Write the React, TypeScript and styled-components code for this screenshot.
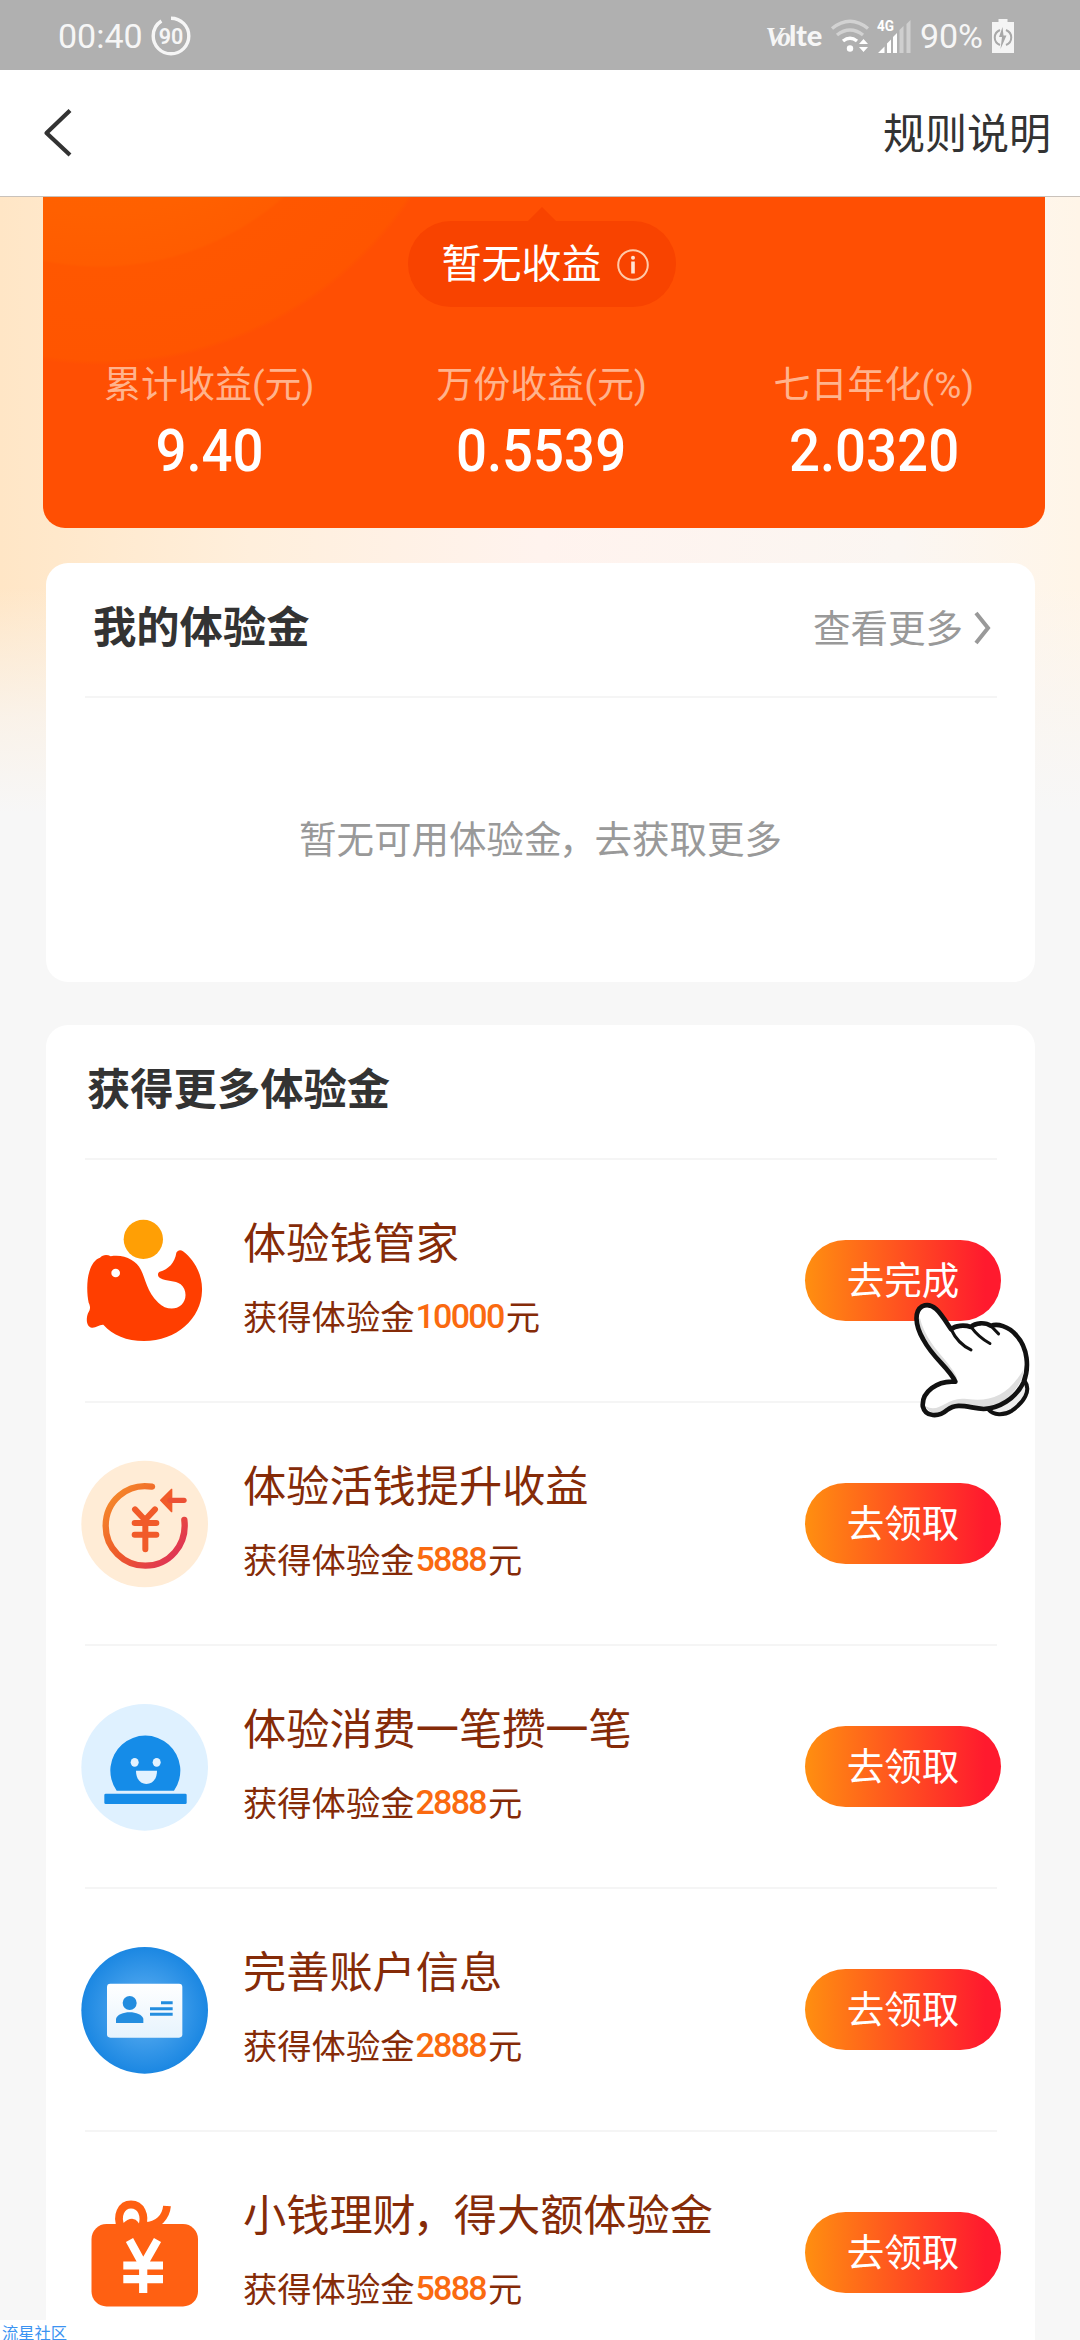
import React from "react";
import styled, { createGlobalStyle } from "styled-components";

const cjk = `"Noto Sans CJK SC", "Noto Sans", sans-serif`;
const latin = `Roboto, "Noto Sans CJK SC", sans-serif`;

const GlobalStyle = createGlobalStyle`
  * { box-sizing: border-box; }
  body { margin: 0; background: #f7f7f7; font-family: ${cjk}; }
  svg { display: block; overflow: visible; }
`;

const Screen = styled.div`
  position: relative;
  display: flex;
  flex-direction: column;
  width: 1080px;
  height: 2340px;
  overflow: hidden;
  background: #f7f7f7;
`;

const StatusBar = styled.div`
  flex: none;
  display: flex;
  align-items: center;
  justify-content: space-between;
  height: 70px;
  padding: 1px 66px 0 58px;
  background: #b0b0b0;
  color: #f6f6f6;
  font: 400 34px/40px ${latin};
`;

const StatusGroup = styled.div<{ $gap: number }>`
  display: flex;
  align-items: center;
  gap: ${(p) => p.$gap}px;
`;

const NavBar = styled.div`
  flex: none;
  display: flex;
  align-items: center;
  justify-content: space-between;
  height: 127px;
  padding: 0 29px 0 43px;
  background: #fff;
  border-bottom: 1px solid #c9c2bb;
`;

const NavLink = styled.span`
  color: #333;
  font-size: 42px;
  line-height: 60px;
  padding-bottom: 5px;
`;

const Content = styled.main`
  flex: 1;
  display: flex;
  flex-direction: column;
  min-height: 0;
  background:
    linear-gradient(to bottom, rgba(247, 247, 247, 0) 390px, rgba(248, 246, 244, 0.75) 520px, #f7f7f7 616px),
    linear-gradient(to right, #ffe6c6 0, #ffefdc 250px, #fff3ee 540px, #fbf6f2 900px, #fff5e8 1080px);
`;

const YieldCard = styled.section`
  flex: none;
  display: flex;
  flex-direction: column;
  align-items: center;
  height: 331px;
  margin: 0 35px 0 43px;
  padding-top: 24px;
  border-radius: 0 0 22px 22px;
  background: radial-gradient(
    circle at 57px -208px,
    #ff6500 0,
    #ff6000 225px,
    #ff5c00 276px,
    #ff5700 279px,
    #ff5500 371px,
    #ff4f03 376px
  );
`;

const YieldPill = styled.div`
  position: relative;
  display: flex;
  align-items: center;
  gap: 15px;
  height: 86px;
  margin-right: 5px;
  padding: 0 27px 7px 34px;
  border-radius: 43px;
  background: #f84300;
  color: #fff;
  font-size: 40px;
  line-height: 60px;

  &::before {
    content: "";
    position: absolute;
    left: 50%;
    top: -14px;
    margin-left: -14px;
    border: 14px solid transparent;
    border-top: 0;
    border-bottom-color: #f84300;
  }
`;

const InfoWrap = styled.span`
  padding-top: 9px;
`;

const Stats = styled.div`
  display: grid;
  grid-template-columns: repeat(3, 1fr);
  align-self: stretch;
  margin-top: 52px;
  padding-right: 5px;
`;

const Stat = styled.div`
  display: flex;
  flex-direction: column;
  align-items: center;
`;

const StatLabel = styled.span`
  color: #ffb38d;
  font: 400 37px/54px ${latin};
`;

const StatValue = styled.span`
  color: #fff;
  font: 500 59px/70px ${latin};
  transform: scaleX(0.925);
  margin-top: 3px;
`;

const Card = styled.section<{ $top: number; $height: number; $open?: boolean }>`
  flex: none;
  display: flex;
  flex-direction: column;
  height: ${(p) => p.$height}px;
  margin: ${(p) => p.$top}px 45px 0 46px;
  border-radius: ${(p) => (p.$open ? "22px 22px 0 0" : "22px")};
  background: #fff;
`;

const CardHead = styled.header<{ $indent: number }>`
  flex: none;
  display: flex;
  align-items: center;
  justify-content: space-between;
  height: 133px;
  padding: 0 44px 12px ${(p) => p.$indent}px;
`;

const CardTitle = styled.h2`
  margin: 0;
  color: #333;
  font-size: 43.3px;
  font-weight: 700;
  line-height: 60px;
`;

const MoreLink = styled.span`
  display: flex;
  align-items: center;
  gap: 11px;
  padding-top: 4px;
  color: #999;
  font-size: 37.5px;
  line-height: 54px;
`;

const ChevronWrap = styled.span`
  padding-top: 4px;
`;

const Divider = styled.div`
  flex: none;
  height: 2px;
  margin: 0 38px 0 39px;
  background: #f5f5f5;
`;

const EmptyNote = styled.div`
  flex: 1;
  display: flex;
  align-items: center;
  justify-content: center;
  padding-bottom: 7px;
  color: #999;
  font-size: 37.5px;
`;

const Comma = styled.span`
  margin-left: -0.07em;
  letter-spacing: -0.05em;
`;

const Task = styled.div`
  flex: none;
  display: flex;
  align-items: center;
  height: 241px;
  padding: 0 34px 0 35px;
`;

const TaskIcon = styled.svg`
  flex: none;
  width: 127px;
  height: 127px;
`;

const TaskText = styled.div`
  flex: 1;
  display: flex;
  flex-direction: column;
  gap: 21px;
  margin-left: 35px;
  padding-bottom: 13px;
  color: #852b08;
`;

const TaskName = styled.span`
  font-size: 43.2px;
  line-height: 60px;
`;

const TaskReward = styled.span`
  display: flex;
  align-items: center;
  font-size: 34.3px;
  line-height: 48px;
`;

const Amount = styled.b`
  padding-top: 3px;
  color: #fa6a10;
  font: 500 34px/45px ${latin};
  letter-spacing: -1.7px;
  margin: 0 2px 0 1px;
`;

const TaskButton = styled.div`
  position: relative;
  display: flex;
  align-items: center;
  justify-content: center;
  width: 196px;
  height: 81px;
  padding-bottom: 6px;
  border-radius: 41px;
  background: linear-gradient(to right, #ff8f10, #ff1a2e 92%);
  color: #fff;
  font-size: 37.5px;
`;

const Pointer = styled.svg`
  position: absolute;
  left: 107px;
  top: 61px;
  width: 120px;
  height: 118px;
  z-index: 1;
`;

const Watermark = styled.div`
  position: absolute;
  left: 0;
  bottom: 0;
  width: 70px;
  height: 20px;
  padding: 0 0 0 2px;
  background: #fff;
  color: #3b93f2;
  font-size: 16.3px;
  line-height: 24px;
  white-space: nowrap;
`;

function BatteryRing() {
  return (
    <svg width="40" height="40" viewBox="0 0 40 40">
      <circle cx="20" cy="20" r="17.8" fill="none" stroke="#f6f6f6" strokeWidth="3.4" strokeDasharray="101 11" transform="rotate(-90 20 20)" />
      <text x="20" y="27.6" textAnchor="middle" fontFamily="Roboto" fontWeight="600" fontSize="21.5" fill="#f6f6f6">90</text>
    </svg>
  );
}

const Volte = styled.span`
  display: flex;
  align-items: baseline;
  line-height: 40px;
`;

const VolteScript = styled.i`
  font: italic 700 27px/40px "Liberation Serif", serif;
  letter-spacing: -3px;
  margin-right: 1px;
`;

const VolteBold = styled.b`
  font: 900 29px/40px Lato, sans-serif;
  letter-spacing: -0.3px;
`;

function WifiMark() {
  return (
    <svg width="38" height="34" viewBox="0 0 38 34" fill="none" strokeWidth="3.4">
      <path d="M1 9.5 Q19 -5 37 9.5" stroke="#d2d2d2" />
      <path d="M6 16 Q19 6 32 16" stroke="#d2d2d2" />
      <path d="M12 22 Q19 16.500 26 22" stroke="#fff" />
      <circle cx="19" cy="29.500" r="3.200" fill="#fff" />
      <path d="M28 25 L32.500 20 L37 25Z M28 28 L32.500 33 L37 28Z" fill="#fff" />
    </svg>
  );
}

function SignalMark() {
  return (
    <svg width="33" height="34" viewBox="0 0 33 34">
      <path d="M0 34 L6.500 27.500 V34Z M9 34 V24.500 L13 20.500 V34Z M15 34 V18 L19 14 V34Z" fill="#fff" />
      <path d="M21.500 34 V11 L25.500 7 V34Z M28.500 34 V5 L32.500 1 V34Z" fill="#cfcfcf" />
      <text x="-1" y="11.500" fontFamily="Roboto" fontWeight="700" fontSize="15" textLength="17" lengthAdjust="spacingAndGlyphs" fill="#fff">4G</text>
    </svg>
  );
}

function BatteryMark() {
  return (
    <svg width="22" height="34" viewBox="0 0 22 34">
      <path d="M6.500 0 H15.500 V3 H22 V34 H0 V3 H6.500Z" fill="#f4f4f4" />
      <path d="M8 11 C1 14 1 23 8 26 M14 11 C21 14 21 23 14 26" fill="none" stroke="#a8a8a8" strokeWidth="2" />
      <path d="M10.500 8 L7 18 H10 L8.500 30 L14.500 16.500 H11.500Z" fill="#a8a8a8" />
    </svg>
  );
}

function WhaleIcon() {
  return (
    <TaskIcon viewBox="63 81 381 381">
      <circle cx="250" cy="148" r="59" fill="#ff9f05" />
      <path
        fill="#ff3e00"
        d="M120 203C128 194 142 193 152 199C192 192 228 210 243 240C258 270 260 304 295 338C315 358 345 362 364 345C382 328 380 298 362 283C345 270 320 276 300 264C292 259 292 248 299 245C325 238 345 218 349 188C353 180 362 178 369 184C405 212 428 255 426 303C424 385 350 453 252 453C200 453 158 435 130 404C118 403 108 414 96 413C78 410 78 385 84 370C90 360 93 352 86 338C80 310 80 270 88 245C95 222 105 208 120 203Z"
      />
      <circle cx="167" cy="249" r="13" fill="#fff" />
    </TaskIcon>
  );
}

function YuanReturnIcon() {
  return (
    <TaskIcon viewBox="63 60 381 381">
      <defs>
        <linearGradient id="ring" gradientUnits="userSpaceOnUse" x1="160" y1="150" x2="370" y2="340">
          <stop offset="0" stopColor="#f58a2b" />
          <stop offset="0.5" stopColor="#ee5a2a" />
          <stop offset="1" stopColor="#de3258" />
        </linearGradient>
      </defs>
      <circle cx="254" cy="252" r="190" fill="#ffecd6" />
      <path d="M276 140 C200 128 137 184 137 258 C137 325 192 377 256 377 C327 377 382 315 373 240" fill="none" stroke="url(#ring)" strokeWidth="19" strokeLinecap="round" />
      <path d="M225 208 L255 240 L285 208 M224 249 H289 M224 284 H289 M256 242 V328" fill="none" stroke="#f15b2a" strokeWidth="18" strokeLinecap="round" strokeLinejoin="round" />
      <path d="M302 181 L335 148 V215Z" fill="#f15b2a" stroke="#f15b2a" strokeWidth="4" strokeLinejoin="round" />
      <path d="M330 181 H372" stroke="#ec5034" strokeWidth="16" strokeLinecap="round" />
    </TaskIcon>
  );
}

function SmileIcon() {
  return (
    <TaskIcon viewBox="63 69 381 381">
      <circle cx="254" cy="262" r="190" fill="#dff1ff" />
      <path d="M170 332 A105 105 0 1 1 342 332Z" fill="#158ce8" />
      <rect x="133" y="341" width="247" height="31" rx="4" fill="#158ce8" />
      <ellipse cx="224" cy="247" rx="12" ry="13" fill="#e2f2ff" />
      <ellipse cx="290" cy="247" rx="12" ry="13" fill="#e2f2ff" />
      <path d="M228 272 H291 C291 298 277 312 259 312 C242 312 228 298 228 272Z" fill="#e2f2ff" />
    </TaskIcon>
  );
}

function IdCardIcon() {
  return (
    <TaskIcon viewBox="63 78 381 381">
      <defs>
        <radialGradient id="disc">
          <stop offset="0.4" stopColor="#46a1ec" />
          <stop offset="1" stopColor="#1b87e2" />
        </radialGradient>
        <linearGradient id="paper" x1="0" y1="0" x2="0" y2="1">
          <stop offset="0" stopColor="#fff" />
          <stop offset="1" stopColor="#e6f3fd" />
        </linearGradient>
      </defs>
      <circle cx="254" cy="271" r="190" fill="url(#disc)" />
      <rect x="141" y="191" width="226" height="162" rx="10" fill="url(#paper)" />
      <circle cx="209" cy="249" r="21" fill="#238ddf" />
      <path d="M168 309 V296 C175 270 243 270 250 296 V309Z" fill="#238ddf" />
      <path d="M303 248 H338 M270 266 H338 M270 283 H338" stroke="#238ddf" strokeWidth="9" />
    </TaskIcon>
  );
}

function GiftIcon() {
  return (
    <TaskIcon viewBox="0 0 127 127">
      <rect x="10.500" y="35" width="106.500" height="82.500" rx="15" fill="#ff6012" />
      <path d="M40 38 C35 27 40 15.500 50 15.500 C60 15.500 65 26 61 38 M56 40 C54 32 50 32 44 38 M64 37 C77 37 85 28 86 17" fill="none" stroke="#ff6012" strokeWidth="7.800" />
      <path d="M48.500 51 L62.200 76 L76.500 51 M42.300 76.500 H82 M42.300 90.200 H82 M62.200 74 V104" fill="none" stroke="#fff" strokeWidth="8.200" />
    </TaskIcon>
  );
}

function PointerHand() {
  return (
    <Pointer viewBox="455 305 360 355">
      <path d="M793 545C815 575 790 610 755 635C730 650 700 650 683 630" fill="#eee" stroke="#111" strokeWidth="12" strokeLinecap="round" />
      <path
        d="M585 548C565 505 520 480 488 420C462 375 462 335 485 321C520 305 542 345 572 390C585 379 610 376 632 383C645 370 675 368 692 380C710 372 745 380 768 408C803 445 808 505 790 550C765 600 715 628 670 630C620 625 590 610 560 633C535 655 495 655 487 622C483 580 530 543 585 548Z"
        fill="#fff"
      />
      <path d="M478 355C490 410 530 455 560 490C575 510 592 530 590 545L576 535C555 505 515 475 488 425C475 400 468 375 478 355Z M495 622C540 645 560 590 620 600C690 610 745 590 790 510C790 560 730 625 670 628C620 625 590 605 560 630C535 650 505 645 495 622Z" fill="#dedede" />
      <path
        d="M585 548C565 505 520 480 488 420C462 375 462 335 485 321C520 305 542 345 572 390C585 379 610 376 632 383C645 370 675 368 692 380C710 372 745 380 768 408C803 445 808 505 790 550C765 600 715 628 670 630C620 625 590 610 560 633C535 655 495 655 487 622C483 580 530 543 585 548Z"
        fill="none"
        stroke="#111"
        strokeWidth="14"
        strokeLinejoin="round"
      />
      <path d="M572 390C585 418 602 438 632 452M632 383C648 405 665 420 689 433M692 380L715 404" fill="none" stroke="#111" strokeWidth="9" strokeLinecap="round" />
    </Pointer>
  );
}

/* Tightens the space around a full-width comma. */
function Prose({ text }: { text: string }) {
  const [head, tail] = text.split("，");
  if (tail === undefined) return <span>{text}</span>;
  return (
    <span>
      {head}
      <Comma>，</Comma>
      {tail}
    </span>
  );
}

const stats = [
  { label: "累计收益(元)", value: "9.40" },
  { label: "万份收益(元)", value: "0.5539" },
  { label: "七日年化(%)", value: "2.0320" },
];

const tasks = [
  { name: "体验钱管家", amount: "10000", action: "去完成", Icon: WhaleIcon, pointed: true },
  { name: "体验活钱提升收益", amount: "5888", action: "去领取", Icon: YuanReturnIcon },
  { name: "体验消费一笔攒一笔", amount: "2888", action: "去领取", Icon: SmileIcon },
  { name: "完善账户信息", amount: "2888", action: "去领取", Icon: IdCardIcon },
  { name: "小钱理财，得大额体验金", amount: "5888", action: "去领取", Icon: GiftIcon },
];

export default function App() {
  return (
    <>
      <GlobalStyle />
      <Screen>
        <StatusBar>
          <StatusGroup $gap={8}>
            <span>00:40</span>
            <BatteryRing />
          </StatusGroup>
          <StatusGroup $gap={9}>
            <Volte>
              <VolteScript>Vo</VolteScript>
              <VolteBold>lte</VolteBold>
            </Volte>
            <WifiMark />
            <SignalMark />
            <span>90%</span>
            <BatteryMark />
          </StatusGroup>
        </StatusBar>

        <NavBar>
          <svg width="30" height="46" viewBox="0 0 30 46" fill="none" stroke="#333" strokeWidth="4.200">
            <path d="M27 0.500 L3.500 23 L27 45" strokeLinejoin="round" />
          </svg>
          <NavLink>规则说明</NavLink>
        </NavBar>

        <Content>
          <YieldCard>
            <YieldPill>
              暂无收益
              <InfoWrap>
                <svg width="32" height="32" viewBox="0 0 32 32">
                  <circle cx="16" cy="16" r="14.800" fill="none" stroke="#ffc9a8" strokeWidth="2" />
                  <path d="M16 12.500 V24.500" stroke="#ffe4d3" strokeWidth="3.600" />
                  <circle cx="16" cy="8.800" r="2" fill="#ffe4d3" />
                </svg>
              </InfoWrap>
            </YieldPill>
            <Stats>
              {stats.map((s) => (
                <Stat key={s.label}>
                  <StatLabel>{s.label}</StatLabel>
                  <StatValue>{s.value}</StatValue>
                </Stat>
              ))}
            </Stats>
          </YieldCard>

          <Card $top={35} $height={419}>
            <CardHead $indent={47}>
              <CardTitle>我的体验金</CardTitle>
              <MoreLink>
                查看更多
                <ChevronWrap>
                  <svg width="17" height="34" viewBox="0 0 17 34" fill="none" stroke="#999" strokeWidth="4">
                    <path d="M2 2 L14 17 L2 32" />
                  </svg>
                </ChevronWrap>
              </MoreLink>
            </CardHead>
            <Divider />
            <EmptyNote>
              <Prose text="暂无可用体验金，去获取更多" />
            </EmptyNote>
          </Card>

          <Card $top={43} $height={1360} $open>
            <CardHead $indent={41}>
              <CardTitle>获得更多体验金</CardTitle>
            </CardHead>
            {tasks.map(({ name, amount, action, Icon, pointed }) => (
              <React.Fragment key={name}>
                <Divider />
                <Task>
                  <Icon />
                  <TaskText>
                    <TaskName>
                      <Prose text={name} />
                    </TaskName>
                    <TaskReward>
                      获得体验金<Amount>{amount}</Amount>元
                    </TaskReward>
                  </TaskText>
                  <TaskButton>
                    {action}
                    {pointed && <PointerHand />}
                  </TaskButton>
                </Task>
              </React.Fragment>
            ))}
          </Card>
        </Content>

        <Watermark>流星社区</Watermark>
      </Screen>
    </>
  );
}
